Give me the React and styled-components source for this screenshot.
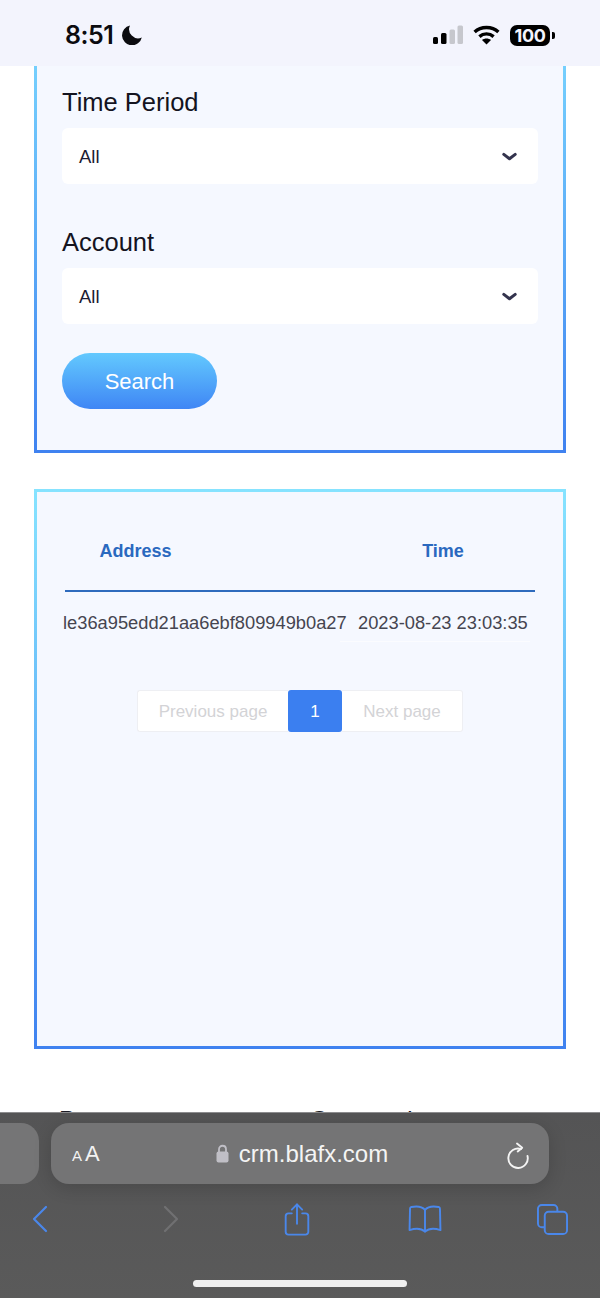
import React from 'react';
import styled, { createGlobalStyle } from 'styled-components';

const GlobalStyle = createGlobalStyle`
  html, body {
    margin: 0;
    padding: 0;
    background: #fff;
  }
  * {
    box-sizing: border-box;
  }
`;

const Phone = styled.div`
  width: 600px;
  height: 1298px;
  display: flex;
  flex-direction: column;
  overflow: hidden;
  font-family: "Liberation Sans", Arial, sans-serif;
`;

const StatusBar = styled.div`
  flex: 0 0 66px;
  background: #f3f4fd;
  display: flex;
  align-items: center;
  justify-content: space-between;
  padding: 4px 45px 0 65px;
`;

const Clock = styled.div`
  display: flex;
  align-items: center;
  gap: 9px;
  font-family: Inter, "Liberation Sans", sans-serif;
  font-size: 25px;
  font-weight: 600;
  letter-spacing: -0.5px;
  color: #0b0b0f;
`;

const StatusIcons = styled.div`
  display: flex;
  align-items: center;
  gap: 10px;
`;

const Battery = styled.div`
  display: flex;
  align-items: center;
  gap: 2px;
`;

const BatteryBody = styled.div`
  width: 40px;
  height: 21px;
  border-radius: 7px;
  background: #000;
  color: #f3f4fd;
  font-family: Inter, "Liberation Sans", sans-serif;
  font-size: 18px;
  font-weight: 700;
  line-height: 21px;
  letter-spacing: -0.3px;
  text-align: center;
`;

const BatteryCap = styled.div`
  width: 3px;
  height: 7px;
  border-radius: 0 2px 2px 0;
  background: #000;
`;

const Content = styled.div`
  flex: 1 1 auto;
  min-height: 0;
  overflow: hidden;
  background: #fff;
  padding: 0 34px;
`;

const Card = styled.div`
  border: 3px solid;
  border-image: linear-gradient(180deg, #86e3ff 0%, #3f82f0 100%) 1;
  background: #f5f8ff;
`;

const FilterCard = styled(Card)`
  margin-top: -46px;
  height: 433px;
  padding: 63px 25px 0;
  border-image: linear-gradient(180deg, #7bd8ff 0%, #3f82f0 100%) 1;
`;

const Field = styled.div`
  margin-bottom: ${props => (props.$last ? 29 : 42)}px;
`;

const FieldLabel = styled.div`
  font-size: 25.5px;
  line-height: 32px;
  color: #14141f;
  margin-bottom: 10px;
`;

const Select = styled.div`
  height: 56px;
  border-radius: 6px;
  background: #fff;
  display: flex;
  align-items: center;
  justify-content: space-between;
  padding: 2px 21px 0 17px;
  font-size: 18.5px;
  color: #1c1c33;
`;

const SearchButton = styled.div`
  width: 155px;
  height: 56px;
  border-radius: 28px;
  background: linear-gradient(180deg, #63c9fe 0%, #3f86f5 100%);
  color: #fff;
  font-size: 22px;
  line-height: 58px;
  text-align: center;
`;

const TableCard = styled(Card)`
  margin-top: 36px;
  height: 560px;
  padding: 0 28px;
`;

const TableHead = styled.div`
  height: 100px;
  border-bottom: 2px solid #2e6bbd;
  display: flex;
  align-items: center;
  justify-content: space-between;
  font-size: 18px;
  font-weight: 700;
  color: #2a69bf;
`;

const HeadCell = styled.div`
  width: ${props => props.$width}px;
  text-align: center;
  padding-top: 20px;
`;

const TableRow = styled.div`
  height: 50px;
  display: flex;
  font-size: 18.3px;
  color: #454550;
`;

const AddressCell = styled.div`
  width: 277px;
  margin-left: -2px;
  line-height: 62px;
  white-space: nowrap;
`;

const TimeCell = styled.div`
  width: 190px;
  padding-left: 18px;
  line-height: 62px;
  white-space: nowrap;
  border-bottom: 1px solid #fbfcff;
`;

const Pager = styled.div`
  margin-top: 48px;
  display: flex;
  justify-content: center;
`;

const PageLink = styled.div`
  height: 42px;
  width: ${props => props.$width}px;
  background: #fff;
  border: 1px solid #eeeff3;
  border-left-width: ${props => (props.$last ? 0 : 1)}px;
  border-right-width: ${props => (props.$first ? 0 : 1)}px;
  border-radius: ${props => (props.$first ? '3px 0 0 3px' : '0 3px 3px 0')};
  color: #d3d3d6;
  font-size: 17px;
  line-height: 41px;
  text-align: center;
`;

const CurrentPage = styled.div`
  width: 54px;
  height: 42px;
  border-radius: 3px;
  background: #3b7ff0;
  color: #fff;
  font-size: 17px;
  line-height: 43px;
  text-align: center;
`;

const FooterColumns = styled.div`
  margin-top: 55px;
  display: flex;
  padding-left: 25px;
  font-size: 24px;
  line-height: 32px;
  color: #1c1c26;
`;

const FooterTitle = styled.div`
  width: 251px;
`;

const SafariBar = styled.div`
  flex: 0 0 186px;
  background: linear-gradient(180deg, #545455 0%, #5a5a5a 100%);
  border-top: 1px solid #8c8c8e;
  display: flex;
  flex-direction: column;
`;

const TabRow = styled.div`
  display: flex;
  gap: 12px;
  margin-top: 10px;
  height: 61px;
`;

const PrevTab = styled.div`
  width: 39px;
  background: #757576;
  border-radius: 0 18px 18px 0;
`;

const AddressBar = styled.div`
  width: 498px;
  background: #747475;
  border-radius: 18px;
  box-shadow: 0 4px 18px rgba(0, 0, 0, 0.16);
  display: flex;
  align-items: center;
  justify-content: space-between;
  padding: 0 19px 0 21px;
  color: #fff;
`;

const TextSize = styled.div`
  display: flex;
  align-items: baseline;
  width: 26px;
  padding-top: 2px;
  font-size: 22px;
  line-height: 24px;
  color: #f2f2f2;
  white-space: nowrap;
`;

const SmallA = styled.span`
  font-size: 15px;
  margin-right: 3px;
`;

const Domain = styled.div`
  display: flex;
  align-items: center;
  gap: 10px;
  font-size: 24px;
  color: #f4f4f4;
`;

const NavRow = styled.div`
  display: grid;
  grid-template-columns: 128px 134px 118px 138px 116px;
  justify-items: center;
  align-items: center;
  margin: 16px 0 0 -24px;
  height: 38px;
`;

const HomeIndicator = styled.div`
  width: 214px;
  height: 7px;
  margin: 42px auto 0;
  border-radius: 4px;
  background: #f0f0f0;
`;

const Moon = () => (
  <svg width="20" height="20" viewBox="0 0 20 20">
    <path d="M8 0.5 A10 10 0 1 0 19.8 12.5 A9 9 0 0 1 8 0.5 Z" fill="#0b0b0f" />
  </svg>
);

const Signal = () => (
  <svg width="30" height="20" viewBox="0 0 30 20">
    <rect x="0" y="12" width="5" height="7" rx="1.5" fill="#000" />
    <rect x="8" y="8" width="5.5" height="11" rx="1.5" fill="#000" />
    <rect x="16.5" y="4.5" width="5.5" height="14.5" rx="1.5" fill="#c6c7cd" />
    <rect x="24.5" y="0.5" width="5.5" height="18.5" rx="1.5" fill="#c6c7cd" />
  </svg>
);

const Wifi = () => (
  <svg width="27" height="20" viewBox="0 0 27 20" fill="none">
    <path d="M1.6 7 C8 1 19 1 25.4 7" stroke="#000" strokeWidth="3.4" />
    <path d="M6.4 11.6 C10.5 8 16.5 8 20.6 11.6" stroke="#000" strokeWidth="3.4" />
    <path d="M13.5 19.5 L9 15 C11.5 13 15.5 13 18 15 Z" fill="#000" />
  </svg>
);

const Chevron = () => (
  <svg width="15" height="10" viewBox="0 0 15 10" fill="none">
    <path d="M1.8 2.4 L7.5 6.8 L13.2 2.4" stroke="#33334d" strokeWidth="3" strokeLinecap="round" strokeLinejoin="round" />
  </svg>
);

const Lock = () => (
  <svg width="13" height="19" viewBox="0 0 13 19" fill="none">
    <path d="M3 8 V5.2 C3 0.6 10 0.6 10 5.2 V8" stroke="#c0bfc6" strokeWidth="1.8" />
    <rect x="0.5" y="7.5" width="12" height="11" rx="2" fill="#c0bfc6" />
  </svg>
);

const Reload = () => (
  <svg width="24" height="32" viewBox="0 0 24 32" fill="none" stroke="#f4f4f4" strokeWidth="1.9" strokeLinecap="round" strokeLinejoin="round">
    <path d="M15 11 A9.7 9.7 0 1 0 21.5 18" />
    <path d="M11 5.5 L16.2 9.7 L11.7 13.5" />
  </svg>
);

const Back = ({ color }) => (
  <svg width="16" height="28" viewBox="0 0 16 28" fill="none" stroke={color} strokeWidth="2.2" strokeLinecap="round" strokeLinejoin="round">
    <path d="M14 2 L2 14 L14 26" />
  </svg>
);

const Forward = ({ color }) => (
  <svg width="16" height="28" viewBox="0 0 16 28" fill="none" stroke={color} strokeWidth="2.2" strokeLinecap="round" strokeLinejoin="round">
    <path d="M2 2 L14 14 L2 26" />
  </svg>
);

const Share = () => (
  <svg width="26" height="33" viewBox="0 0 26 35" fill="none" stroke="#4a87ea" strokeWidth="2" strokeLinecap="round" strokeLinejoin="round">
    <path d="M7.5 11 H4 A3 3 0 0 0 1 14 V30.5 A3 3 0 0 0 4 33.5 H22 A3 3 0 0 0 25 30.5 V14 A3 3 0 0 0 22 11 H18.5" />
    <path d="M13 22 V1.5" />
    <path d="M7.5 7 L13 1.5 L18.5 7" />
  </svg>
);

const Book = () => (
  <svg width="34" height="28" viewBox="0 0 34 29" fill="none" stroke="#4a87ea" strokeWidth="2" strokeLinecap="round" strokeLinejoin="round">
    <path d="M17 5 C14 1.5 8 1 2.8 2 C2 2.2 1.5 3 1.5 4 L1 26 C7 24 13 24 17 27.5 C21 24 27 24 33 26 L32.5 4 C32.5 3 32 2.2 31.2 2 C26 1 20 1.5 17 5 Z" />
    <path d="M17 5 V27.5" />
  </svg>
);

const Tabs = () => (
  <svg width="31" height="31" viewBox="0 0 32 32" fill="none" stroke="#4a87ea" strokeWidth="2" strokeLinejoin="round">
    <path d="M8 24 H5 A4 4 0 0 1 1 20 V5 A4 4 0 0 1 5 1 H17 A4 4 0 0 1 21 5 V8" />
    <rect x="8" y="8" width="23" height="23" rx="4" />
  </svg>
);

const Dropdown = ({ label, last }) => (
  <Field $last={last}>
    <FieldLabel>{label}</FieldLabel>
    <Select>
      All
      <Chevron />
    </Select>
  </Field>
);

const App = () => (
  <Phone>
    <GlobalStyle />
    <StatusBar>
      <Clock>
        8:51
        <Moon />
      </Clock>
      <StatusIcons>
        <Signal />
        <Wifi />
        <Battery>
          <BatteryBody>100</BatteryBody>
          <BatteryCap />
        </Battery>
      </StatusIcons>
    </StatusBar>
    <Content>
      <FilterCard>
        <Dropdown label="Time Period" />
        <Dropdown label="Account" last />
        <SearchButton>Search</SearchButton>
      </FilterCard>
      <TableCard>
        <TableHead>
          <HeadCell $width={141}>Address</HeadCell>
          <HeadCell $width={184}>Time</HeadCell>
        </TableHead>
        <TableRow>
          <AddressCell>le36a95edd21aa6ebf809949b0a27</AddressCell>
          <TimeCell>2023-08-23 23:03:35</TimeCell>
        </TableRow>
        <Pager>
          <PageLink $first $width={151}>Previous page</PageLink>
          <CurrentPage>1</CurrentPage>
          <PageLink $last $width={121}>Next page</PageLink>
        </Pager>
      </TableCard>
      <FooterColumns>
        <FooterTitle>Partners</FooterTitle>
        <FooterTitle>Community</FooterTitle>
      </FooterColumns>
    </Content>
    <SafariBar>
      <TabRow>
        <PrevTab />
        <AddressBar>
          <TextSize>
            <SmallA>A</SmallA>A
          </TextSize>
          <Domain>
            <Lock />
            crm.blafx.com
          </Domain>
          <Reload />
        </AddressBar>
      </TabRow>
      <NavRow>
        <Back color="#4a87ea" />
        <Forward color="#707072" />
        <Share />
        <Book />
        <Tabs />
      </NavRow>
      <HomeIndicator />
    </SafariBar>
  </Phone>
);

export default App;
